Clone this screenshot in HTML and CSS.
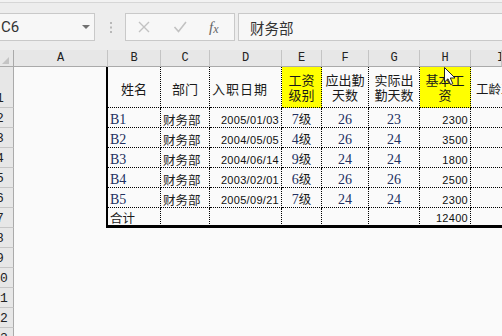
FILE: index.html
```html
<!DOCTYPE html>
<html lang="zh">
<head>
<meta charset="utf-8">
<title>Sheet</title>
<link rel="stylesheet" href="styles.css">
</head>
<body>
<div class="top"></div>
<div class="fbar">
  <div class="box namebox"><span class="val">C6</span><span class="arrow"></span></div>
  <div class="grip">
    <svg width="3" height="11" viewBox="0 0 3 11"><rect x="1" y="0" width="2" height="2" fill="#b8b8b8"/><rect x="1" y="4.5" width="2" height="2" fill="#b8b8b8"/><rect x="1" y="9" width="2" height="2" fill="#b8b8b8"/></svg>
  </div>
  <div class="box fxbox">
    <svg class="ic" width="14" height="12" viewBox="0 0 14 12"><path d="M2 1 L12 11 M12 1 L2 11" stroke="#c2c2c2" stroke-width="1.4" fill="none"/></svg>
    <svg class="ic" width="14" height="12" viewBox="0 0 14 12"><path d="M1.5 6 L5.5 10.5 L13 1" stroke="#c2c2c2" stroke-width="1.6" fill="none"/></svg>
    <span class="fx"><i>f</i><i class="sx">x</i></span>
  </div>
  <div class="box formula"><span>财务部</span></div>
</div>

<div class="sheet">
  <div class="corner"><span class="tri"></span></div>
  <div class="ch"><span>A</span></div>
  <div class="ch"><span>B</span></div>
  <div class="ch"><span>C</span></div>
  <div class="ch"><span>D</span></div>
  <div class="ch"><span>E</span></div>
  <div class="ch"><span>F</span></div>
  <div class="ch"><span>G</span></div>
  <div class="ch"><span>H</span></div>
  <div class="ch chi"><span>I</span></div>

  <div class="rh"><span>1</span></div>
  <div class="ta"></div>
  <div class="t hd one"><span>姓名</span></div>
  <div class="t hd one"><span>部门</span></div>
  <div class="t hd one wide"><span>入职日期</span></div>
  <div class="t hd y"><span>工资<br>级别</span></div>
  <div class="t hd"><span>应出勤<br>天数</span></div>
  <div class="t hd"><span>实际出<br>勤天数</span></div>
  <div class="t hd y"><span>基本工<br>资</span></div>
  <div class="t hd one last lft"><span>工龄工资</span></div>

  <div class="rh"><span>2</span></div>
  <div class="ta"></div>
  <div class="t l ser"><span>B1</span></div>
  <div class="t l cjk"><span>财务部</span></div>
  <div class="t r sans"><span>2005/01/03</span></div>
  <div class="t m ser"><span>7<span class="cj">级</span></span></div>
  <div class="t m ser"><span>26</span></div>
  <div class="t m ser"><span>23</span></div>
  <div class="t r sans"><span>2300</span></div>
  <div class="t last"></div>

  <div class="rh"><span>3</span></div>
  <div class="ta"></div>
  <div class="t l ser"><span>B2</span></div>
  <div class="t l cjk"><span>财务部</span></div>
  <div class="t r sans"><span>2004/05/05</span></div>
  <div class="t m ser"><span>4<span class="cj">级</span></span></div>
  <div class="t m ser"><span>26</span></div>
  <div class="t m ser"><span>24</span></div>
  <div class="t r sans"><span>3500</span></div>
  <div class="t last"></div>

  <div class="rh"><span>4</span></div>
  <div class="ta"></div>
  <div class="t l ser"><span>B3</span></div>
  <div class="t l cjk"><span>财务部</span></div>
  <div class="t r sans"><span>2004/06/14</span></div>
  <div class="t m ser"><span>9<span class="cj">级</span></span></div>
  <div class="t m ser"><span>24</span></div>
  <div class="t m ser"><span>24</span></div>
  <div class="t r sans"><span>1800</span></div>
  <div class="t last"></div>

  <div class="rh"><span>5</span></div>
  <div class="ta"></div>
  <div class="t l ser"><span>B4</span></div>
  <div class="t l cjk"><span>财务部</span></div>
  <div class="t r sans"><span>2003/02/01</span></div>
  <div class="t m ser"><span>6<span class="cj">级</span></span></div>
  <div class="t m ser"><span>26</span></div>
  <div class="t m ser"><span>26</span></div>
  <div class="t r sans"><span>2500</span></div>
  <div class="t last"></div>

  <div class="rh"><span>6</span></div>
  <div class="ta"></div>
  <div class="t l ser"><span>B5</span></div>
  <div class="t l cjk"><span>财务部</span></div>
  <div class="t r sans"><span>2005/09/21</span></div>
  <div class="t m ser"><span>7<span class="cj">级</span></span></div>
  <div class="t m ser"><span>24</span></div>
  <div class="t m ser"><span>24</span></div>
  <div class="t r sans"><span>2300</span></div>
  <div class="t last"></div>

  <div class="rh"><span>7</span></div>
  <div class="ta"></div>
  <div class="t tot l cjk"><span>合计</span></div>
  <div class="t tot"></div>
  <div class="t tot"></div>
  <div class="t tot"></div>
  <div class="t tot"></div>
  <div class="t tot"></div>
  <div class="t tot r sans"><span>12400</span></div>
  <div class="t tot last"></div>

  <div class="rh"><span>8</span></div>
  <div></div><div></div><div></div><div></div><div></div><div></div><div></div><div></div><div></div>
  <div class="rh"><span>9</span></div>
  <div></div><div></div><div></div><div></div><div></div><div></div><div></div><div></div><div></div>
  <div class="rh"><span>10</span></div>
  <div></div><div></div><div></div><div></div><div></div><div></div><div></div><div></div><div></div>
  <div class="rh"><span>11</span></div>
  <div></div><div></div><div></div><div></div><div></div><div></div><div></div><div></div><div></div>
  <div class="rh"><span>12</span></div>
  <div></div><div></div><div></div><div></div><div></div><div></div><div></div><div></div><div></div>
  <div class="rh"><span>13</span></div>
  <div></div><div></div><div></div><div></div><div></div><div></div><div></div><div></div><div></div>
</div>

<svg class="cursor" width="13" height="19" viewBox="0 0 13 19"><path d="M0.5 0.5 L0.5 15 L4 11.8 L6.6 17.6 L8.8 16.7 L6.3 11 L11 11 Z" fill="#ffffff" stroke="#222222" stroke-width="1" stroke-linejoin="round"/></svg>
</body>
</html>
```

FILE: styles.css
```css
html, body {
  margin: 0;
  padding: 0;
  width: 502px;
  height: 336px;
  overflow: hidden;
  background: #fafafa;
}
body {
  position: relative;
  font-family: "Liberation Sans", "Noto Sans CJK SC", sans-serif;
}

.top {
  height: 2px;
  background: #f2f2f2;
  border-bottom: 1px solid #d6d6d6;
}
.fbar {
  height: 47px;
  box-sizing: border-box;
  padding-top: 10px;
  display: flex;
  align-items: flex-start;
  background: #ededed;
}
.box {
  height: 28px;
  box-sizing: border-box;
  border: 1px solid #c9c9c9;
  background: #f7f7f7;
  display: flex;
  align-items: center;
}
.namebox {
  width: 95px;
  border-left: 0;
  padding-left: 1px;
  padding-right: 4px;
  justify-content: space-between;
}
.namebox .val {
  font-family: Roboto, "Liberation Sans", sans-serif;
  font-size: 15px;
  color: #333;
}
.arrow {
  width: 0;
  height: 0;
  border-left: 4px solid transparent;
  border-right: 4px solid transparent;
  border-top: 4px solid #717171;
}
.grip {
  width: 30px;
  height: 28px;
  display: flex;
  align-items: center;
  justify-content: center;
}
.fxbox {
  width: 110px;
  padding-left: 11px;
  gap: 22px;
}
.ic {
  flex: none;
}
.fx {
  font-family: "Liberation Serif", serif;
  font-size: 15px;
  color: #666;
  width: 14px;
}
.fx .sx {
  font-size: 12px;
  position: relative;
  top: 1px;
}
.formula {
  flex: 1;
  margin-left: 3px;
  border-right: 0;
  padding-left: 11px;
  font-family: "Noto Sans CJK SC", sans-serif;
  font-size: 14.5px;
  color: #333;
}

.sheet {
  display: grid;
  grid-template-columns: 14px 94px 53px 49px 72px 40px 47px 51px 51px 1fr;
  grid-template-rows: 17px 41px repeat(12, 20px);
}
.sheet > div {
  box-sizing: border-box;
  overflow: hidden;
  white-space: nowrap;
  display: flex;
  min-width: 0;
}

.corner {
  background: #e7e7e7;
  border-right: 1px solid #aaaaaa;
  border-bottom: 1px solid #aaaaaa;
  justify-content: flex-end;
  align-items: flex-end;
  padding: 0 4px 2px 0;
}
.tri {
  width: 0;
  height: 0;
  border-left: 7px solid transparent;
  border-bottom: 7px solid #c4c4c4;
}
.ch {
  background: #e7e7e7;
  border-right: 1px solid #c4c4c4;
  border-bottom: 1px solid #aaaaaa;
  justify-content: center;
  align-items: center;
  font-family: "Liberation Mono", monospace;
  font-size: 12px;
  color: #222;
}
.chi {
  justify-content: flex-start;
  padding-left: 26px;
}
.rh {
  background: #e7e7e7;
  border-right: 1px solid #aaaaaa;
  border-bottom: 1px solid #c6c6c6;
  align-items: flex-end;
  font-family: "Liberation Mono", monospace;
  font-size: 13px;
  line-height: 17px;
  color: #222;
}
.rh span {
  display: block;
  flex: none;
  width: 26px;
  margin-left: -13px;
  text-align: center;
}

.ta {
  border-right: 2px solid #000;
}
.t {
  border-right: 1px dotted #000;
  border-bottom: 1px dotted #000;
  align-items: flex-end;
  line-height: 14px;
}
.last {
  border-right: 0;
}
.tot {
  border-bottom: 3px solid #000;
}

.hd {
  align-items: center;
  justify-content: center;
  text-align: center;
  font-family: "Noto Sans CJK SC", sans-serif;
  font-size: 13px;
  line-height: 15px;
  color: #1a1a1a;
}
.one {
  padding-top: 3px;
}
.wide {
  justify-content: flex-start;
  padding-left: 2px;
  letter-spacing: 1px;
}
.lft {
  justify-content: flex-start;
  padding-left: 5px;
  font-size: 12.5px;
}
.y {
  background: #ffff00;
}
.ser {
  font-family: "Liberation Serif", "Noto Sans CJK SC", serif;
  font-size: 14px;
  color: #22305f;
}
.cj {
  font-family: "Noto Sans CJK SC", sans-serif;
  font-size: 12.5px;
  color: #1a1a1a;
}
.cjk {
  font-family: "Noto Sans CJK SC", sans-serif;
  font-size: 12.5px;
  color: #1a1a1a;
}
.sans {
  font-family: "Liberation Sans", sans-serif;
  font-size: 11px;
  line-height: 13px;
  color: #111;
}
.sans span {
  letter-spacing: 0.3px;
}
.l {
  justify-content: flex-start;
  padding-left: 2px;
}
.r {
  justify-content: flex-end;
  padding-right: 2px;
}
.m {
  justify-content: center;
}

.cursor {
  position: absolute;
  left: 444px;
  top: 67px;
}
```
